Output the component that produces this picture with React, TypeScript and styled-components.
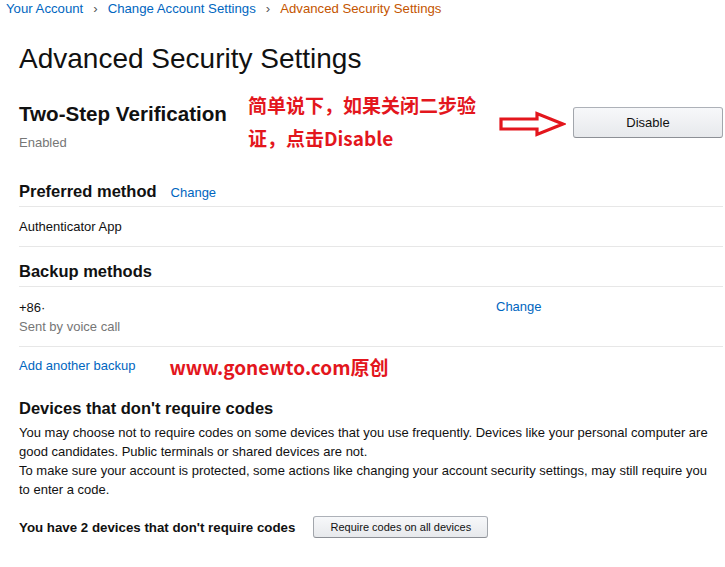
import styled, { createGlobalStyle } from "styled-components";

const GlobalStyle = createGlobalStyle`
    body {
        margin: 0;
        background: #fff;
        font-family: "Liberation Sans", Arial, sans-serif;
        font-size: 13px;
        color: #111;
    }
`;

const App = () => {
    return (
        <>
            <GlobalStyle />
            <Breadcrumb>
                <Crumb>Your Account</Crumb>
                <Sep>›</Sep>
                <Crumb>Change Account Settings</Crumb>
                <Sep>›</Sep>
                <Crumb $current>Advanced Security Settings</Crumb>
            </Breadcrumb>

            <Main>
                <Title>Advanced Security Settings</Title>

                <TopRow>
                    <StatusBlock>
                        <BigHeading>Two-Step Verification</BigHeading>
                        <Muted>Enabled</Muted>
                    </StatusBlock>
                    <Note>简单说下，如果关闭二步验<br />证，点击Disable</Note>
                    <Arrow width="67" height="26" viewBox="0 0 67 26">
                        <polygon
                            points="2,8 38,8 38,2.5 64,13 38,23.5 38,18 2,18"
                            fill="#fff"
                            stroke="#e3161d"
                            strokeWidth="3.2"
                            strokeLinejoin="miter"
                        />
                    </Arrow>
                    <Button $wide>Disable</Button>
                </TopRow>

                <SectionHead $first>
                    <SectionTitle>Preferred method</SectionTitle>
                    <Link>Change</Link>
                </SectionHead>
                <Row>Authenticator App</Row>

                <SectionHead>
                    <SectionTitle>Backup methods</SectionTitle>
                </SectionHead>
                <BackupRow>
                    <BackupInfo>
                        <div>+86·</div>
                        <Muted>Sent by voice call</Muted>
                    </BackupInfo>
                    <Link>Change</Link>
                </BackupRow>

                <AddRow>
                    <Link>Add another backup</Link>
                    <SiteNote>www.gonewto.com原创</SiteNote>
                </AddRow>

                <DevicesTitle>Devices that don't require codes</DevicesTitle>
                <Para>
                    You may choose not to require codes on some devices that you use frequently. Devices like your personal computer are good candidates. Public terminals or shared devices are not.
                    <br />
                    To make sure your account is protected, some actions like changing your account security settings, may still require you to enter a code.
                </Para>

                <DevicesRow>
                    <strong>You have 2 devices that don't require codes</strong>
                    <Button>Require codes on all devices</Button>
                </DevicesRow>
            </Main>
        </>
    );
};

export default App;

const Breadcrumb = styled.nav`
    display: flex;
    gap: 10px;
    padding-left: 6px;
    line-height: 17px;
    font-size: 13.2px;
`;
const Crumb = styled.span<{ $current?: boolean }>`
    color: ${(p) => (p.$current ? "#c45500" : "#0066c0")};
`;
const Sep = styled.span`
    color: #555;
`;
const Main = styled.main`
    padding: 0 2px 40px 19px;
`;
const Title = styled.h1`
    margin: 25px 0 0;
    font-size: 28px;
    line-height: 34px;
    font-weight: 400;
`;
const TopRow = styled.div`
    display: flex;
    align-items: flex-start;
    margin-top: 12px;
`;
const StatusBlock = styled.div`
    width: 229px;
    padding-top: 13px;
`;
const BigHeading = styled.h2`
    margin: 0 0 7px;
    font-size: 20.6px;
    line-height: 25px;
    font-weight: 700;
`;
const Muted = styled.div`
    color: #767676;
    line-height: 19px;
`;
const Note = styled.div`
    width: 251px;
    color: #e3161d;
    font-family: "Noto Sans CJK SC", "Liberation Sans", sans-serif;
    font-weight: 700;
    font-size: 19px;
    line-height: 33px;
`;
const Arrow = styled.svg`
    margin-top: 23px;
    flex-shrink: 0;
`;
const Button = styled.button<{ $wide?: boolean }>`
    margin-left: ${(p) => (p.$wide ? "auto" : "18px")};
    margin-top: ${(p) => (p.$wide ? "19px" : "0")};
    width: ${(p) => (p.$wide ? "150px" : "175px")};
    height: ${(p) => (p.$wide ? "31px" : "22px")};
    padding: 0;
    font-family: "Liberation Sans", Arial, sans-serif;
    font-size: ${(p) => (p.$wide ? "13px" : "11px")};
    color: #111;
    background: linear-gradient(#f7f8fa, #e7e9ec);
    border: 1px solid #adb1b8;
    border-color: #adb1b8 #a2a6ac #8d9096;
    border-radius: 3px;
`;
const SectionHead = styled.div<{ $first?: boolean }>`
    display: flex;
    align-items: baseline;
    gap: 14px;
    margin-top: ${(p) => (p.$first ? "26px" : "13px")};
    padding-bottom: 4px;
    border-bottom: 1px solid #e7e7e7;
`;
const SectionTitle = styled.h3`
    margin: 0;
    font-size: 16.5px;
    line-height: 22px;
    font-weight: 700;
`;
const Link = styled.a`
    color: #0066c0;
    cursor: pointer;
    line-height: 17px;
`;
const Row = styled.div`
    padding: 11px 0 11px;
    line-height: 17px;
    border-bottom: 1px solid #e7e7e7;
`;
const BackupRow = styled.div`
    display: flex;
    align-items: flex-start;
    padding: 11px 0 10px;
    line-height: 19px;
    border-bottom: 1px solid #e7e7e7;
`;
const BackupInfo = styled.div`
    width: 477px;
`;
const AddRow = styled.div`
    display: flex;
    align-items: center;
    gap: 34px;
    margin-top: 6px;
`;
const SiteNote = styled.span`
    color: #e3161d;
    font-family: "Noto Sans CJK SC", "Liberation Sans", sans-serif;
    font-weight: 700;
    font-size: 19px;
    line-height: 24px;
    position: relative;
    top: 2px;
`;
const DevicesTitle = styled.h3`
    margin: 20px 0 0;
    font-size: 16.5px;
    line-height: 22px;
    font-weight: 700;
`;
const Para = styled.p`
    margin: 4px 0 0;
    max-width: 699px;
    line-height: 19px;
`;
const DevicesRow = styled.div`
    display: flex;
    align-items: center;
    margin-top: 17px;
    & > strong {
        font-size: 13.3px;
    }
`;
